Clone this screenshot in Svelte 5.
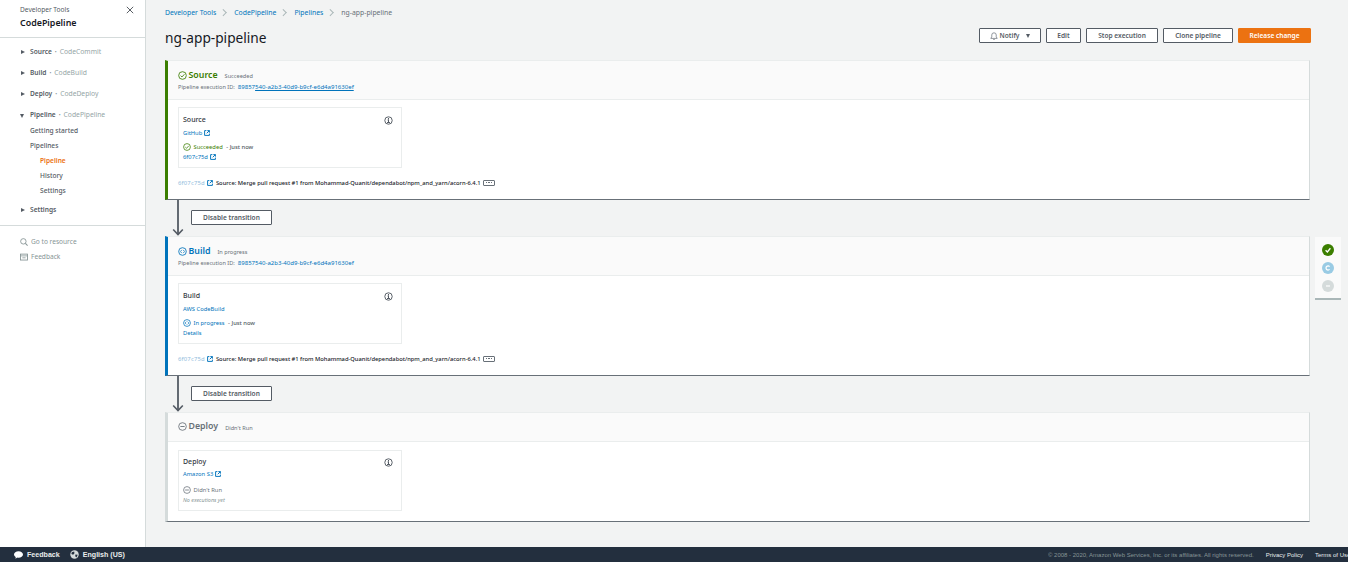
<script lang="ts">
  const services = [
    { name: 'Source', provider: 'CodeCommit' },
    { name: 'Build', provider: 'CodeBuild' },
    { name: 'Deploy', provider: 'CodeDeploy' }
  ];
  const executionId = '89857540-a2b3-40d9-b9cf-e6d4a91630ef';
  const commitMessage = 'Source: Merge pull request #1 from Mohammad-Quanit/dependabot/npm_and_yarn/acorn-6.4.1';
</script>

{#snippet statusIcon(tone: string, size: number)}
  <svg class={'status ' + tone} width={size} height={size} viewBox="0 0 16 16" fill="none" aria-hidden="true">
    <circle cx="8" cy="8" r="6.8" stroke="currentColor" stroke-width="1.5" />
    {#if tone === 'ok'}
      <path d="M4.6 8.2 7.1 10.6 11.4 5.8" stroke="currentColor" stroke-width="1.5" />
    {:else if tone === 'run'}
      <path d="M6.8 5.2 4.2 8l2.6 2.8M9.2 5.2 11.8 8l-2.6 2.8" stroke="currentColor" stroke-width="1.3" />
    {:else}
      <path d="M4.2 8h7.6" stroke="currentColor" stroke-width="1.6" />
    {/if}
  </svg>
{/snippet}

{#snippet external()}
  <svg class="ext" width="6" height="6" viewBox="0 0 10 10" fill="none" aria-hidden="true">
    <path d="M4 1H1v8h8V6" stroke="currentColor" stroke-width="1.6" />
    <path d="M5.5 1H9v3.5M9 1 4.5 5.5" stroke="currentColor" stroke-width="1.6" />
  </svg>
{/snippet}

{#snippet info()}
  <svg class="info" width="9" height="9" viewBox="0 0 16 16" fill="none" aria-hidden="true">
    <circle cx="8" cy="8" r="6.6" stroke="#545b64" stroke-width="1.7" />
    <path d="M8 3.600v2.200M6.400 7.200H8v4.300M5.400 11.500h5.200" stroke="#545b64" stroke-width="1.800" />
  </svg>
{/snippet}

{#snippet commit()}
  <div class="commit">
    <span class="sha">6f07c75d</span>
    <span class="ext-wrap">{@render external()}</span>
    <span class="msg">{commitMessage}</span>
    <span class="more">
      <i></i><i></i><i></i>
    </span>
  </div>
{/snippet}

{#snippet transition()}
  <div class="transition">
    <div class="arrow">
      <svg width="12" height="36" viewBox="0 0 12 36" fill="none" aria-hidden="true">
        <path d="M6 0v34.5" stroke="#545b64" stroke-width="1.800" />
        <path d="M1.200 29.500 6 34.500 10.800 29.500" stroke="#545b64" stroke-width="1.600" />
      </svg>
    </div>
    <button type="button" class="btn wide">Disable transition</button>
  </div>
{/snippet}

<div class="page">
  <div class="shell">
    <aside class="side">
      <header class="side-head">
        <div>
          <div class="kicker">Developer Tools</div>
          <div class="product">CodePipeline</div>
        </div>
        <svg class="close" width="8" height="8" viewBox="0 0 8 8" aria-hidden="true">
          <path d="M.8.8l6.4 6.400M7.200.8.800 7.200" stroke="#30363d" stroke-width=".8" />
        </svg>
      </header>

      <nav class="side-nav">
        {#each services as s}
          <div class="group">
            <span class="caret"></span>
            <b>{s.name}</b><span class="dot">•</span><span class="prov">{s.provider}</span>
          </div>
        {/each}
        <div class="group open">
          <span class="caret down"></span>
          <b>Pipeline</b><span class="dot">•</span><span class="prov">CodePipeline</span>
        </div>
        <ul class="sub">
          <li>Getting started</li>
          <li>Pipelines</li>
          <li class="deep active">Pipeline</li>
          <li class="deep">History</li>
          <li class="deep">Settings</li>
        </ul>
        <div class="group last">
          <span class="caret"></span>
          <b>Settings</b>
        </div>
      </nav>

      <div class="side-foot">
        <div class="foot-row">
          <svg width="8" height="8" viewBox="0 0 10 10" fill="none" aria-hidden="true">
            <circle cx="4.200" cy="4.200" r="3.400" stroke="#879596" stroke-width="1.100" />
            <path d="M6.700 6.700 9.500 9.500" stroke="#879596" stroke-width="1.300" />
          </svg>
          Go to resource
        </div>
        <div class="foot-row">
          <svg width="8" height="8" viewBox="0 0 10 10" fill="none" aria-hidden="true">
            <rect x=".6" y="1.400" width="8.800" height="7.400" stroke="#879596" stroke-width="1.100" />
            <path d="M.6 3.600h8.800M3 6h4" stroke="#879596" stroke-width="1" />
          </svg>
          Feedback
        </div>
      </div>
    </aside>

    <main class="main">
      <div class="crumbs">
        <a href="#a">Developer Tools</a>
        <span class="sep"></span>
        <a href="#b">CodePipeline</a>
        <span class="sep"></span>
        <a href="#c">Pipelines</a>
        <span class="sep"></span>
        <span class="here">ng-app-pipeline</span>
      </div>

      <div class="title-row">
        <h1>ng-app-pipeline</h1>
        <div class="actions">
          <button type="button" class="btn notify">
            <svg width="8" height="8" viewBox="0 0 10 10" fill="none" aria-hidden="true">
              <path d="M1 8h8L7.800 6V3.800a2.800 2.800 0 0 0-5.600 0V6L1 8ZM4 9.300h2" stroke="#687078" stroke-width=".9" />
            </svg>
            Notify
            <span class="btn-caret"></span>
          </button>
          <button type="button" class="btn edit">Edit</button>
          <button type="button" class="btn stop">Stop execution</button>
          <button type="button" class="btn clone">Clone pipeline</button>
          <button type="button" class="btn primary">Release change</button>
        </div>
      </div>

      <section class="stage ok">
        <header class="stage-head">
          <div class="stage-title">
            {@render statusIcon('ok', 9)}
            <h2>Source</h2>
            <span class="stage-status">Succeeded</span>
          </div>
          <div class="exec">Pipeline execution ID: <a href="#d">{executionId.slice(0, 5)}<span class="underlined">{executionId.slice(5)}</span></a></div>
        </header>
        <div class="stage-body">
          <div class="action">
            <div class="action-top"><span class="action-name">Source</span>{@render info()}</div>
            <div class="provider"><a href="#e">GitHub</a>{@render external()}</div>
            <div class="result">
              {@render statusIcon('ok', 8)}
              <span class="res-ok">Succeeded</span>
              <span class="res-time">- Just now</span>
            </div>
            <div class="detail"><a href="#f">6f07c75d</a>{@render external()}</div>
          </div>
          {@render commit()}
        </div>
      </section>

      {@render transition()}

      <section class="stage run">
        <header class="stage-head">
          <div class="stage-title">
            {@render statusIcon('run', 9)}
            <h2>Build</h2>
            <span class="stage-status">In progress</span>
          </div>
          <div class="exec">Pipeline execution ID: <a href="#g">{executionId}</a></div>
        </header>
        <div class="stage-body">
          <div class="action">
            <div class="action-top"><span class="action-name">Build</span>{@render info()}</div>
            <div class="provider"><a href="#h">AWS CodeBuild</a></div>
            <div class="result">
              {@render statusIcon('run', 8)}
              <span class="res-run">In progress</span>
              <span class="res-time">- Just now</span>
            </div>
            <div class="detail"><a href="#i">Details</a></div>
          </div>
          {@render commit()}
        </div>
      </section>

      {@render transition()}

      <section class="stage idle">
        <header class="stage-head short">
          <div class="stage-title">
            {@render statusIcon('idle', 9)}
            <h2>Deploy</h2>
            <span class="stage-status">Didn't Run</span>
          </div>
        </header>
        <div class="stage-body">
          <div class="action">
            <div class="action-top"><span class="action-name">Deploy</span>{@render info()}</div>
            <div class="provider"><a href="#j">Amazon S3</a>{@render external()}</div>
            <div class="result">
              {@render statusIcon('idle', 8)}
              <span class="res-idle">Didn't Run</span>
            </div>
            <div class="none">No executions yet</div>
          </div>
        </div>
      </section>
    </main>
  </div>

  <aside class="rail">
    <span class="pip pip-ok">
      <svg width="8" height="8" viewBox="0 0 10 10" fill="none" aria-hidden="true">
        <path d="M2 5.400 4.200 7.500 8 2.800" stroke="#fff" stroke-width="1.600" />
      </svg>
    </span>
    <span class="pip pip-run">
      <svg width="8" height="8" viewBox="0 0 10 10" fill="none" aria-hidden="true">
        <path d="M7 3.200A2.600 2.600 0 1 0 7 6.800" stroke="#fff" stroke-width="1.500" />
      </svg>
    </span>
    <span class="pip pip-idle">
      <svg width="8" height="8" viewBox="0 0 10 10" fill="none" aria-hidden="true">
        <path d="M2.500 5h5" stroke="#fff" stroke-width="1.500" />
      </svg>
    </span>
  </aside>

  <footer class="foot">
    <div class="foot-left">
      <span class="foot-item">
        <svg width="9" height="8" viewBox="0 0 12 10" aria-hidden="true">
          <path d="M6 0c3.300 0 6 1.900 6 4.300S9.300 8.500 6 8.500c-.6 0-1.200 0-1.700-.2L2 10l.3-2.500C.9 6.800 0 5.600 0 4.300 0 1.900 2.700 0 6 0Z" fill="#fff" />
        </svg>
        Feedback
      </span>
      <span class="foot-item">
        <svg width="9" height="9" viewBox="0 0 10 10" aria-hidden="true">
          <circle cx="5" cy="5" r="4.700" fill="#d5dbdb" />
          <path d="M2 2.400 4.600 1.800 5 3.600 3.500 5.400 1.500 4.500ZM6 5l2.600.4-1.400 3L5.800 7Z" fill="#232f3e" />
        </svg>
        English (US)
      </span>
    </div>
    <div class="foot-right">
      <span class="copy">© 2008 - 2020, Amazon Web Services, Inc. or its affiliates. All rights reserved.</span>
      <span class="legal">Privacy Policy</span>
      <span class="legal">Terms of Use</span>
    </div>
  </footer>
</div>

<style>
  :global(body) {
    margin: 0;
    background: #f2f3f3;
  }
  .page {
    position: relative;
    width: 1348px;
    height: 562px;
    overflow: hidden;
    display: flex;
    flex-direction: column;
    font-family: "Noto Sans", "Open Sans", sans-serif;
    color: #16191f;
    background: #f2f3f3;
  }
  a {
    color: #0073bb;
    text-decoration: none;
  }
  .shell {
    flex: 1;
    min-height: 0;
    display: flex;
  }

  /* side nav */
  .side {
    width: 145px;
    flex-shrink: 0;
    background: #fff;
    border-right: 1px solid #d5dbdb;
    box-sizing: content-box;
  }
  .side-head {
    height: 37px;
    padding-left: 20px;
    padding-right: 11px;
    border-bottom: 1px solid #d5dbdb;
    display: flex;
    justify-content: space-between;
    align-items: flex-start;
  }
  .kicker {
    margin-top: 5px;
    font-size: 6.600px;
    line-height: 9px;
    color: #545b64;
  }
  .product {
    margin-top: 3px;
    font-size: 8.900px;
    line-height: 12px;
    font-weight: 600;
  }
  .close { margin-top: 6px; }
  .side-nav {
    padding: 9px 0 0 20px;
    height: 188px;
    box-sizing: border-box;
    border-bottom: 1px solid #d5dbdb;
    font-size: 6.600px;
    line-height: 9px;
  }
  .group {
    position: relative;
    height: 9px;
    margin-bottom: 12px;
    padding-left: 10px;
    color: #545b64;
    white-space: nowrap;
  }
  .group b { font-weight: 600; color: #545b64; }
  .group.open { margin-bottom: 2px; }
  .group.last { margin-top: 4px; margin-bottom: 0; }
  .dot { margin: 0 3px; color: #879596; font-size: 5px; }
  .prov { color: #95a5a6; font-size: 6.750px; }
  .caret {
    position: absolute;
    left: 1px;
    top: 3px;
    border-left: 4px solid #545b64;
    border-top: 2.500px solid transparent;
    border-bottom: 2.500px solid transparent;
  }
  .caret.down {
    top: 4px;
    left: 0;
    border-top: 4px solid #545b64;
    border-left: 2.500px solid transparent;
    border-right: 2.500px solid transparent;
    border-bottom: 0;
  }
  .sub {
    list-style: none;
    margin: 0 0 0 10px;
    padding: 5px 0 0;
    color: #545b64;
    font-weight: 500;
  }
  .sub li { height: 15px; line-height: 9px; }
  .sub .deep { padding-left: 10px; }
  .sub .active { color: #ec7211; font-weight: 600; }
  .side-foot {
    padding: 11px 0 0 20px;
    font-size: 6.600px;
    color: #879596;
  }
  .foot-row {
    height: 15px;
    line-height: 9px;
    display: flex;
    gap: 3px;
    align-items: flex-start;
  }
  .foot-row svg { margin-top: 1px; }

  /* main column */
  .main {
    flex: 1;
    min-width: 0;
    padding: 0 37px 0 19px;
    display: flex;
    flex-direction: column;
    font-size: 6.400px;
  }
  .crumbs {
    height: 25px;
    display: flex;
    align-items: center;
    font-size: 6.850px;
  }
  .crumbs .here { color: #687078; }
  .sep {
    width: 3.500px;
    height: 3.500px;
    margin: 0 8.500px 0 5px;
    border-top: 1px solid #aab7b8;
    border-right: 1px solid #aab7b8;
    transform: rotate(45deg);
  }
  .title-row {
    height: 35px;
    display: flex;
    justify-content: space-between;
    align-items: flex-start;
  }
  h1 {
    margin: 3px 0 0;
    font-size: 13.700px;
    line-height: 20px;
    font-weight: 400;
  }
  .actions {
    display: flex;
    gap: 5px;
    margin-top: 3px;
  }
  .btn {
    height: 15px;
    box-sizing: border-box;
    padding: 0;
    border: 1px solid #545b64;
    border-radius: 1px;
    background: #fff;
    color: #545b64;
    font: 600 6.600px/13px "Noto Sans", "Open Sans", sans-serif;
    display: inline-flex;
    align-items: center;
    justify-content: center;
    gap: 2px;
  }
  .notify { width: 62px; }
  .edit { width: 35px; }
  .stop { width: 72px; }
  .clone { width: 70px; }
  .primary {
    width: 73px;
    background: #ec7211;
    border-color: #ec7211;
    color: #fff;
  }
  .btn-caret {
    margin-left: 5px;
    border-top: 4px solid #545b64;
    border-left: 2.500px solid transparent;
    border-right: 2.500px solid transparent;
  }
  .wide { width: 81px; height: 15px; }

  /* stages */
  .stage {
    margin-right: 1px;
    background: #fff;
    border-left: 3px solid #aab7b8;
    border-bottom: 1px solid #687078;
    border-right: 1px solid #d5dbdb;
    border-top: 1px solid #eaeded;
    box-sizing: border-box;
  }
  .stage.ok { border-left-color: #3b7e00; height: 140px; }
  .stage.run { border-left-color: #0073bb; height: 140px; }
  .stage.idle { border-left-color: #d5dbdb; height: 110px; }
  .stage-head {
    height: 39px;
    box-sizing: border-box;
    background: #fafafa;
    border-bottom: 1px solid #eaeded;
    padding: 8px 0 0 10px;
  }
  .stage-head.short { height: 29px; padding-top: 7px; }
  .stage-title {
    display: flex;
    align-items: center;
    height: 12px;
  }
  .stage-title :global(.status) { margin-right: 1.500px; }
  h2 {
    margin: 0;
    font-size: 8.800px;
    line-height: 12px;
    font-weight: 600;
  }
  .ok h2 { color: #3b7e00; }
  .run h2 { color: #0073bb; }
  .idle h2 { color: #687078; }
  .stage-status {
    margin-left: 7px;
    margin-top: 2px;
    font-size: 5.600px;
    color: #687078;
  }
  .idle .stage-status { margin-top: 4px; }
  .exec {
    margin-top: 2px;
    font-size: 5.600px;
    line-height: 9px;
    color: #687078;
    white-space: nowrap;
  }
  .exec a { margin-left: 1.500px; font-size: 6.050px; }
  .underlined {
    text-decoration: underline;
    text-decoration-thickness: .700px;
  }
  .stage-body { padding: 7px 10px 0; }
  .idle .stage-body { padding-top: 8px; }
  .action {
    width: 224px;
    height: 61px;
    box-sizing: border-box;
    border: 1px solid #eaeded;
    background: #fff;
    padding: 7px 4px 0 4px;
    font-size: 5.800px;
    line-height: 8px;
  }
  .idle .action { padding-top: 6px; }
  .action-top {
    display: flex;
    justify-content: space-between;
    align-items: center;
    height: 10px;
    padding-right: 4px;
  }
  .action-name {
    font-size: 7px;
    font-weight: 500;
    color: #33383f;
  }
  .provider {
    margin-top: 3px;
    height: 9px;
    display: flex;
    align-items: center;
    gap: 2px;
    color: #0073bb;
  }
  .idle .provider { margin-top: 2px; }
  .result {
    margin-top: 5px;
    height: 9px;
    display: flex;
    align-items: center;
    gap: 2.500px;
    white-space: nowrap;
  }
  .idle .result { margin-top: 7px; }
  .res-ok { color: #3b7e00; }
  .res-run { color: #0073bb; }
  .res-idle { color: #687078; }
  .res-time { color: #545b64; font-weight: 500; margin-left: 1px; }
  .detail {
    margin-top: 2px;
    height: 8px;
    display: flex;
    align-items: center;
    gap: 2px;
    color: #0073bb;
  }
  .none {
    margin-top: 2px;
    font-style: italic;
    color: #879596;
    font-size: 5.400px;
  }
  :global(.status.ok) { color: #3b7e00; }
  :global(.status.run) { color: #0073bb; }
  :global(.status.idle) { color: #687078; }
  :global(.ext) { color: #0073bb; flex-shrink: 0; }

  .commit {
    margin-top: 10px;
    height: 9px;
    display: flex;
    align-items: center;
    font-size: 5.780px;
    white-space: nowrap;
  }
  .sha { color: #8fbcdc; font-size: 5.900px; letter-spacing: .2px; }
  .ext-wrap { display: flex; margin: 0 2.500px 0 2.500px; }
  .msg { color: #16191f; font-weight: 500; }
  .more {
    margin-left: 2.500px;
    width: 10px;
    height: 4px;
    border: 1px solid #687078;
    border-radius: 1px;
    display: flex;
    align-items: center;
    justify-content: center;
    gap: 1px;
  }
  .more i { width: 1.500px; height: 1.500px; background: #687078; }

  .transition {
    height: 36px;
    display: flex;
    padding-left: 7px;
  }
  .arrow { width: 12px; height: 36px; }
  .transition .btn { margin: 10px 0 0 7px; }

  /* stage jump rail */
  .rail {
    position: absolute;
    left: 1315px;
    top: 237px;
    width: 26px;
    height: 63px;
    box-sizing: border-box;
    background: #fafafa;
    border-bottom: 2px solid #aab7b8;
    padding-top: 7px;
    display: flex;
    flex-direction: column;
    align-items: center;
    gap: 6px;
  }
  .pip {
    width: 12px;
    height: 12px;
    border-radius: 50%;
    display: flex;
    align-items: center;
    justify-content: center;
  }
  .pip-ok { background: #3b7e00; }
  .pip-run { background: #99cbe4; }
  .pip-idle { background: #d5dbdb; }

  /* footer */
  .foot {
    height: 15px;
    flex-shrink: 0;
    background: #232f3e;
    color: #fff;
    display: flex;
    justify-content: space-between;
    align-items: center;
    font-family: "Liberation Sans", Arial, sans-serif;
    padding-left: 14px;
    white-space: nowrap;
  }
  .foot-left {
    display: flex;
    gap: 10px;
    font-size: 7.100px;
    font-weight: 700;
    color: #eaeded;
  }
  .foot-item {
    display: flex;
    align-items: center;
    gap: 4px;
  }
  .foot-right {
    display: flex;
    align-items: center;
    width: 300px;
    flex-shrink: 0;
    font-size: 6px;
    overflow: hidden;
  }
  .copy { color: #879596; margin-right: 12px; }
  .legal { color: #eaeded; margin-right: 12px; }
</style>
